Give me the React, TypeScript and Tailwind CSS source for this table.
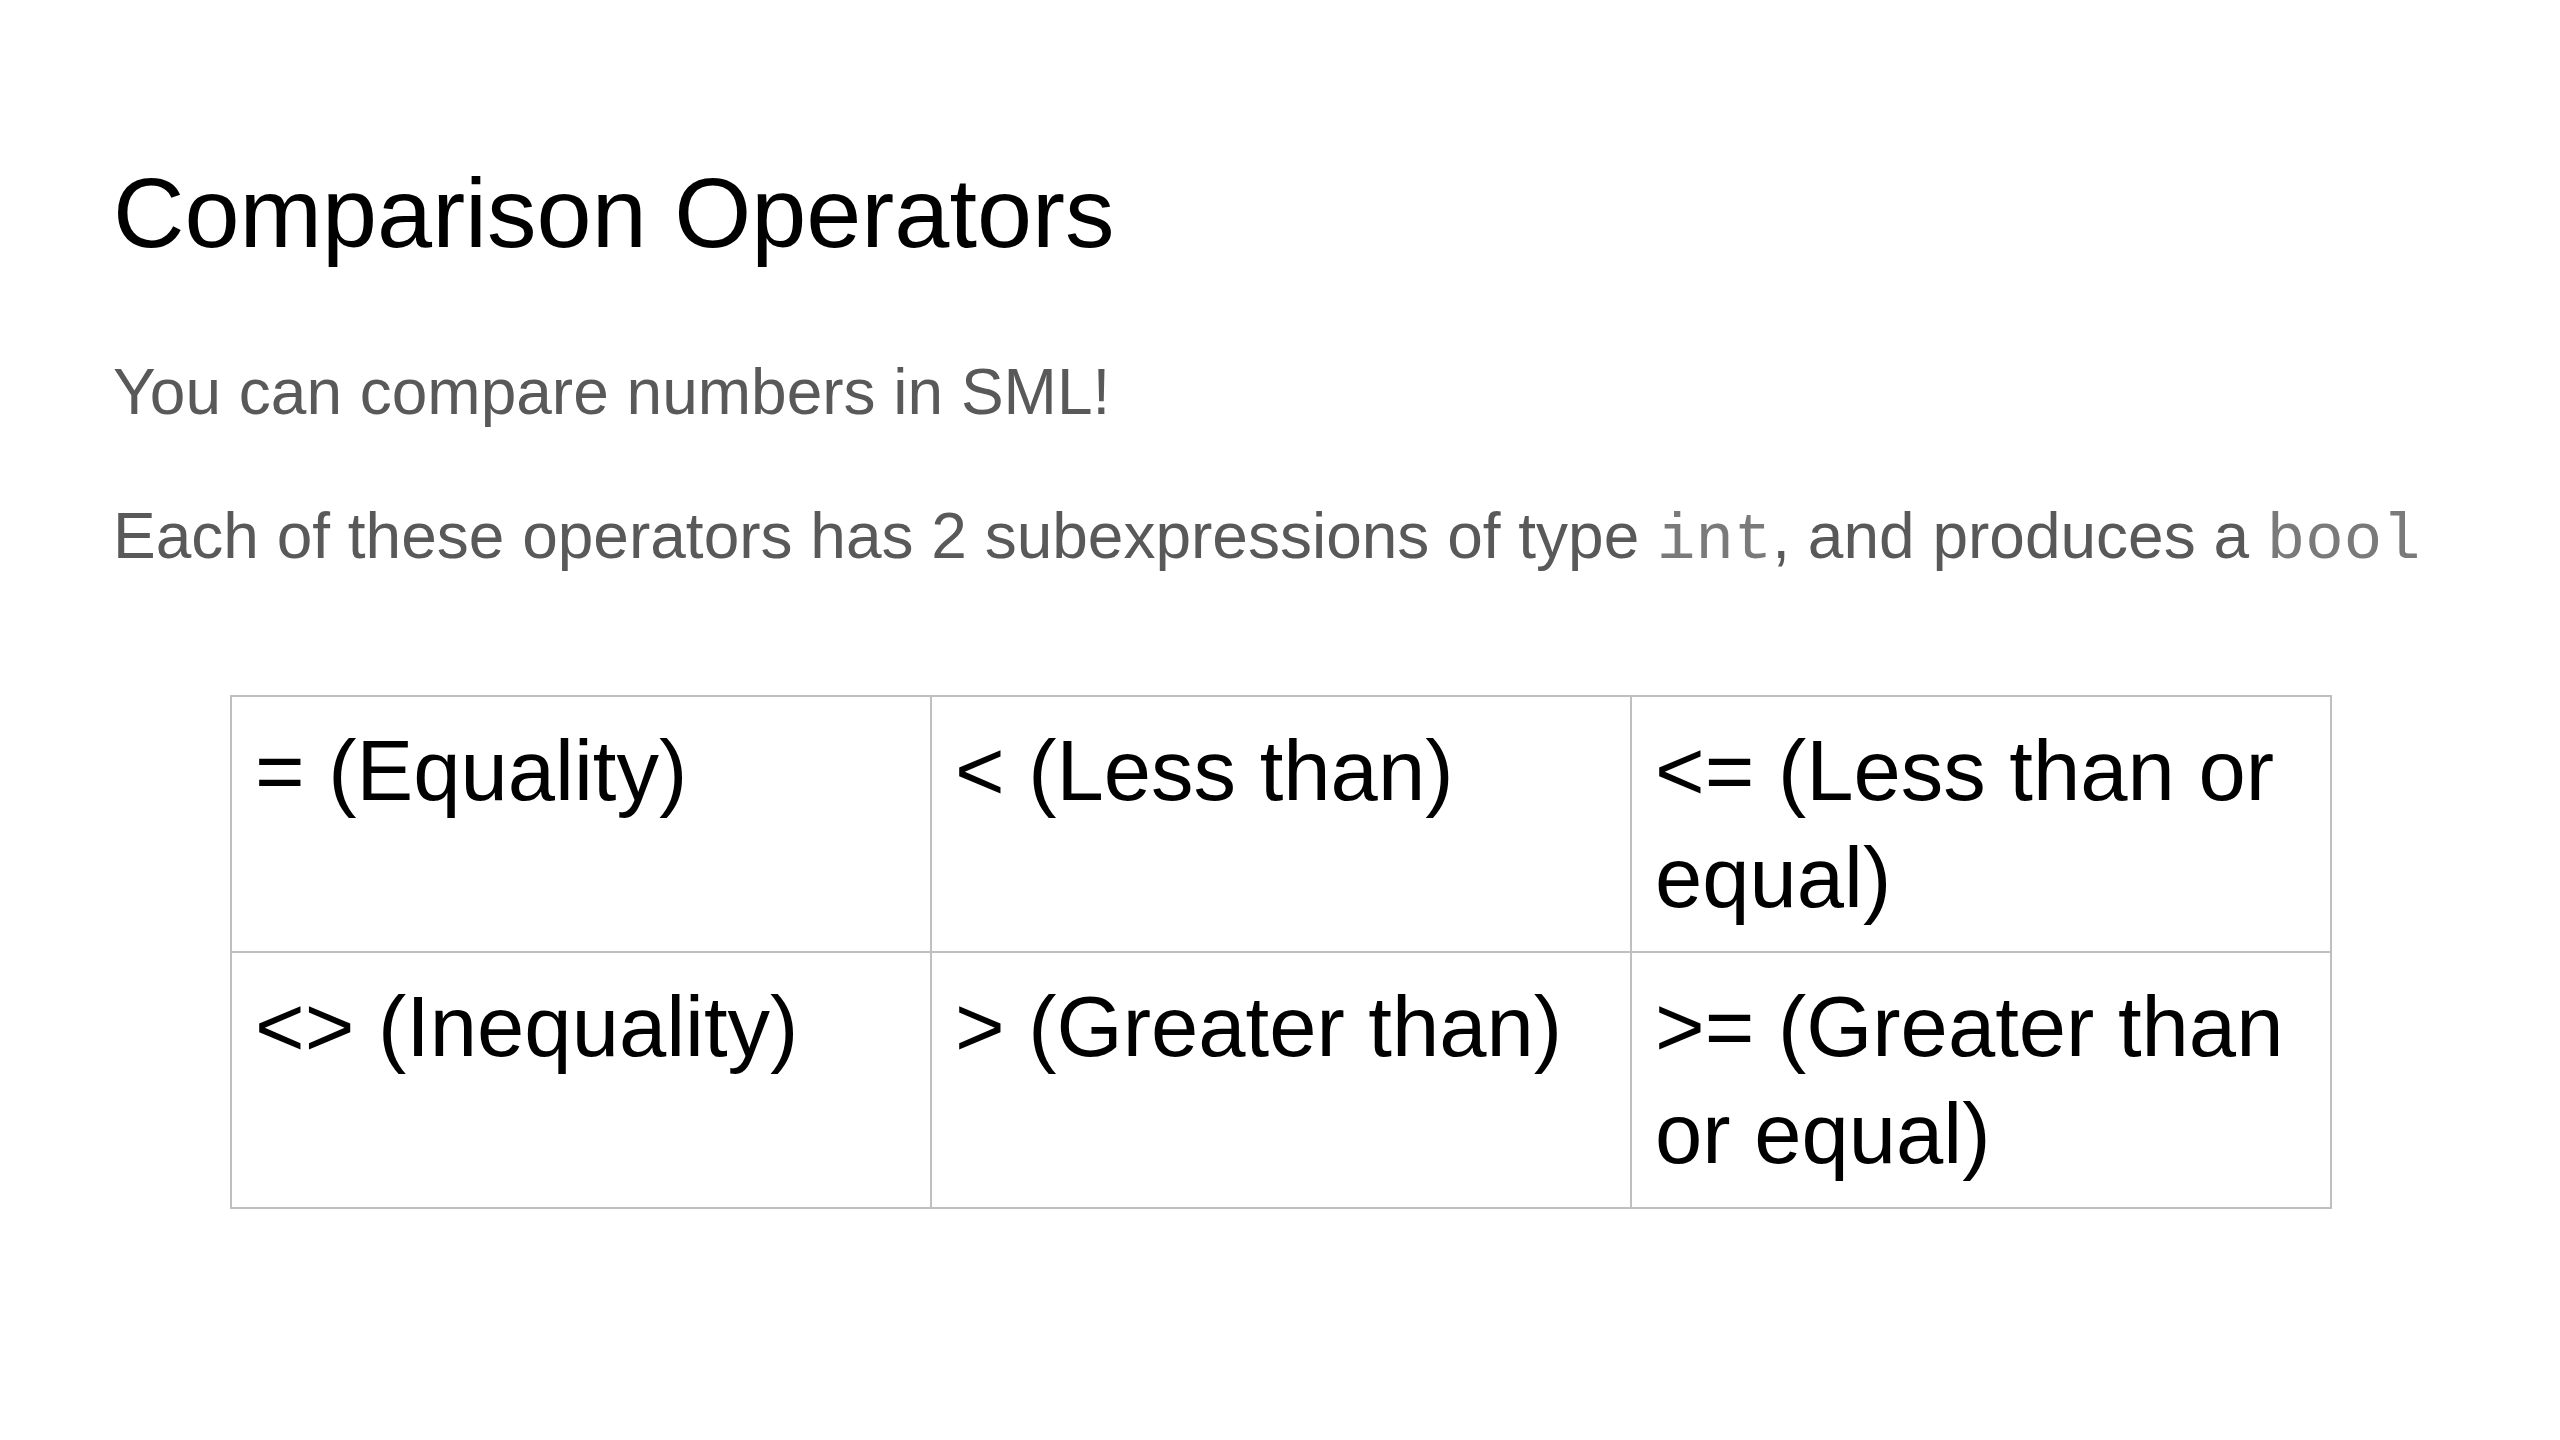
import React from "react";

const rows: string[][] = [
  ["= (Equality)", "< (Less than)", "<= (Less than or equal)"],
  ["<> (Inequality)", "> (Greater than)", ">= (Greater than or equal)"],
];

export default function App() {
  return (
    <div className="w-[2560px] h-[1440px] bg-white overflow-hidden font-['Liberation_Sans',Arial,sans-serif]">
      <div className="pl-[113px] pt-[153px]">
        <h1 className="text-[99px] leading-[119px] text-black font-normal">Comparison Operators</h1>
        <p className="mt-[82px] text-[64px] leading-[77px] text-[#595959]">You can compare numbers in SML!</p>
        <p className="mt-[67px] text-[64px] leading-[77px] text-[#595959] whitespace-nowrap">
          Each of these operators has 2 subexpressions of type{" "}
          <span className="font-['Liberation_Mono','Courier_New',monospace] text-[#7a7a7a]">int</span>, and produces a{" "}
          <span className="font-['Liberation_Mono','Courier_New',monospace] text-[#7a7a7a]">bool</span>
        </p>
      </div>
      <div className="pl-[230px] pt-[115px]">
        <table className="border-collapse table-fixed w-[2100px]">
          <tbody>
            {rows.map((r, i) => (
              <tr key={i}>
                {r.map((c, j) => (
                  <td
                    key={j}
                    className="w-[700px] h-[256px] align-top border-2 border-[#bfbfbf] px-[23px] pt-[20px] pb-[20px] text-[85px] leading-[107px] text-black"
                  >
                    {c}
                  </td>
                ))}
              </tr>
            ))}
          </tbody>
        </table>
      </div>
    </div>
  );
}
